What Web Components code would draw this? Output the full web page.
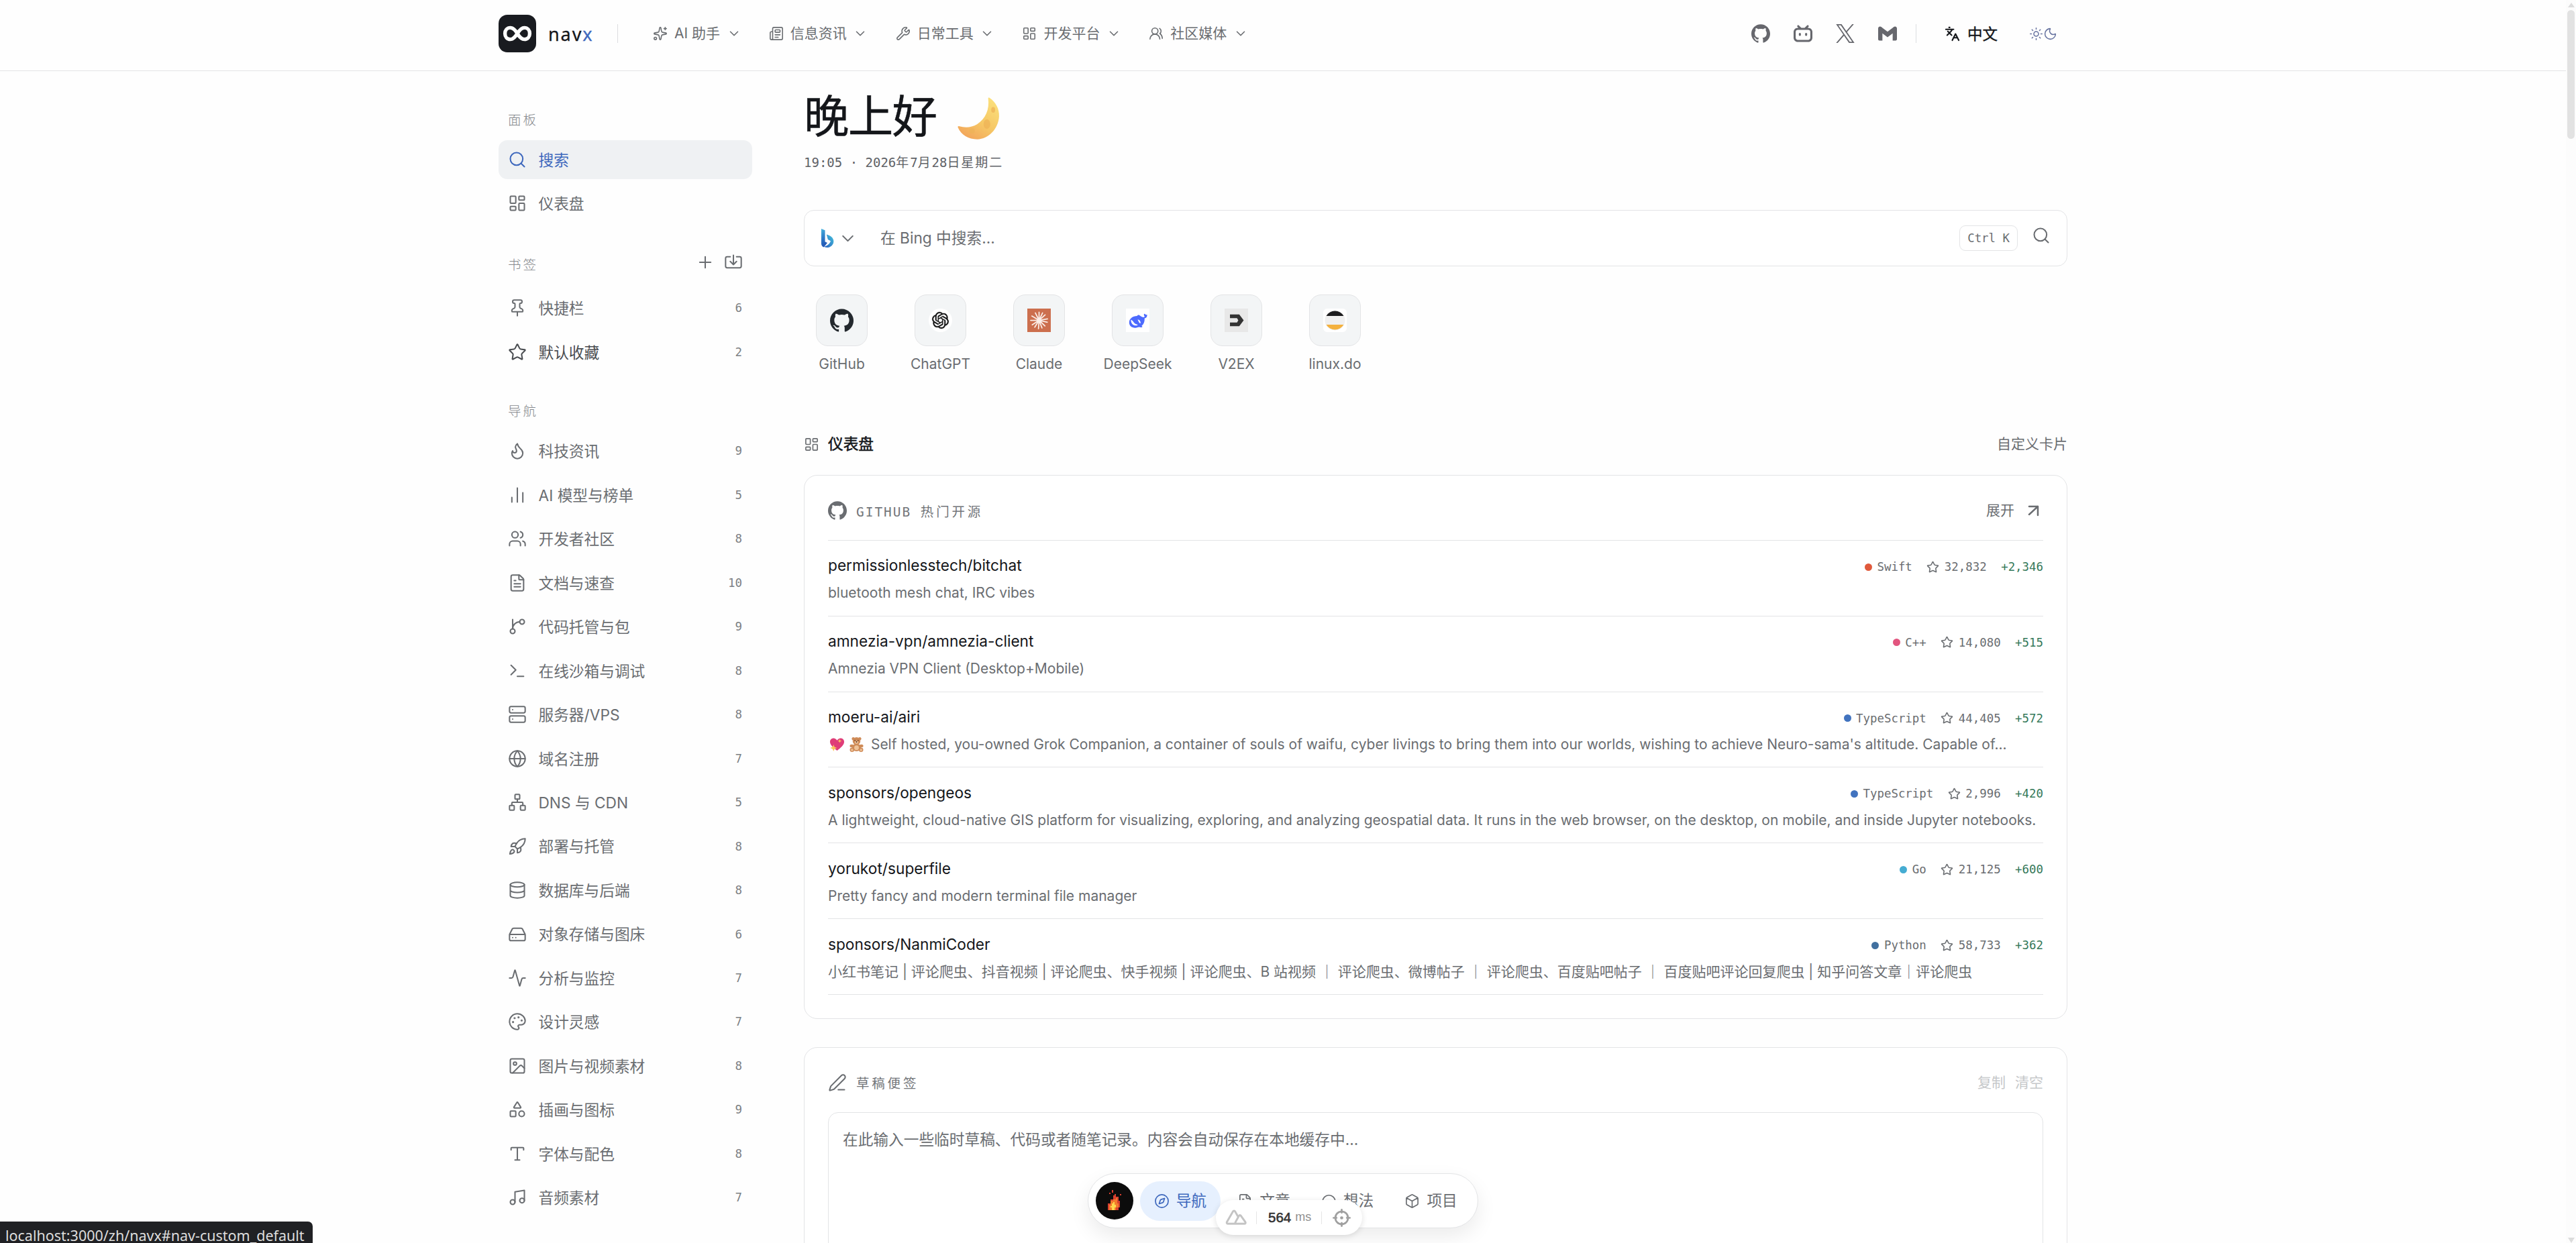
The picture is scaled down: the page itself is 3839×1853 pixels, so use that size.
<!DOCTYPE html>
<html lang="zh-CN">
<head>
<meta charset="utf-8">
<title>navx</title>
<style>
  html, body {
    margin: 0;
    height: 100%;
    overflow: hidden;
  }
  body {
    background: #fefefe;
    color: #6a6d71;
    font-family: Inter, "Noto Sans CJK SC", sans-serif;
    font-size: 22.7px;
    line-height: 1.2;
    --line: #e3e4e6;
    --text: #14161a;
    --muted: #6a6d71;
    --blue: #3e68bd;
    --mono: "DejaVu Sans Mono", "Noto Sans CJK SC", monospace;
  }
</style>
</head>
<body>
<nav-app></nav-app>

<script>
const ICONS = {
  sparkles: `<path d="M11.017 2.814a1 1 0 0 1 1.966 0l1.051 5.558a2 2 0 0 0 1.594 1.594l5.558 1.051a1 1 0 0 1 0 1.966l-5.558 1.051a2 2 0 0 0-1.594 1.594l-1.051 5.558a1 1 0 0 1-1.966 0l-1.051-5.558a2 2 0 0 0-1.594-1.594l-5.558-1.051a1 1 0 0 1 0-1.966l5.558-1.051a2 2 0 0 0 1.594-1.594z"/><path d="M20 2v4M22 4h-4"/><circle cx="4" cy="20" r="2"/>`,
  newspaper: `<path d="M15 18h-5M18 14h-8M4 22h16a2 2 0 0 0 2-2V4a2 2 0 0 0-2-2H8a2 2 0 0 0-2 2v16a2 2 0 0 1-4 0v-9a2 2 0 0 1 2-2h2"/><rect x="10" y="6" width="8" height="4" rx="1"/>`,
  wrench: `<path d="M14.7 6.3a1 1 0 0 0 0 1.4l1.6 1.6a1 1 0 0 0 1.4 0l3.106-3.105c.32-.322.863-.22.983.218a6 6 0 0 1-8.259 7.057l-7.91 7.91a1 1 0 0 1-2.999-3l7.91-7.91a6 6 0 0 1 7.057-8.259c.438.12.54.662.219.984z"/>`,
  dashboard: `<rect x="3" y="3" width="7" height="9" rx="1"/><rect x="14" y="3" width="7" height="5" rx="1"/><rect x="14" y="12" width="7" height="9" rx="1"/><rect x="3" y="16" width="7" height="5" rx="1"/>`,
  usersRound: `<path d="M18 21a8 8 0 0 0-16 0"/><circle cx="10" cy="8" r="5"/><path d="M22 20c0-3.37-2-6.5-4-8a5 5 0 0 0-.45-8.3"/>`,
  users: `<path d="M16 21v-2a4 4 0 0 0-4-4H6a4 4 0 0 0-4 4v2M16 3.128a4 4 0 0 1 0 7.744M22 21v-2a4 4 0 0 0-3-3.87"/><circle cx="9" cy="7" r="4"/>`,
  chevron: `<path d="m6 9 6 6 6-6"/>`,
  search: `<path d="m21 21-4.34-4.34"/><circle cx="11" cy="11" r="8"/>`,
  plus: `<path d="M5 12h14M12 5v14"/>`,
  import: `<path d="M12 3v12M8 11l4 4 4-4M8 5H4a2 2 0 0 0-2 2v10a2 2 0 0 0 2 2h16a2 2 0 0 0 2-2V7a2 2 0 0 0-2-2h-4"/>`,
  pin: `<path d="M12 17v5M9 10.76a2 2 0 0 1-1.11 1.79l-1.78.9A2 2 0 0 0 5 15.24V16a1 1 0 0 0 1 1h12a1 1 0 0 0 1-1v-.76a2 2 0 0 0-1.11-1.79l-1.78-.9A2 2 0 0 1 15 10.76V7a1 1 0 0 1 1-1 2 2 0 0 0 0-4H8a2 2 0 0 0 0 4 1 1 0 0 1 1 1z"/>`,
  star: `<path d="M11.525 2.295a.53.53 0 0 1 .95 0l2.31 4.679a2.123 2.123 0 0 0 1.595 1.16l5.166.756a.53.53 0 0 1 .294.904l-3.736 3.638a2.123 2.123 0 0 0-.611 1.878l.882 5.14a.53.53 0 0 1-.771.56l-4.618-2.428a2.122 2.122 0 0 0-1.973 0L6.396 21.01a.53.53 0 0 1-.77-.56l.881-5.139a2.122 2.122 0 0 0-.611-1.879L2.16 9.795a.53.53 0 0 1 .294-.906l5.165-.755a2.122 2.122 0 0 0 1.597-1.16z"/>`,
  flame: `<path d="M12 3q1 4 4 6.5t3 5.5a1 1 0 0 1-14 0 5 5 0 0 1 1-3 1 1 0 0 0 5 0c0-2-1.5-3-1.5-5q0-2 2.5-4"/>`,
  bars: `<path d="M5 21v-6M12 21V3M19 21V9"/>`,
  file: `<path d="M6 22a2 2 0 0 1-2-2V4a2 2 0 0 1 2-2h8a2.4 2.4 0 0 1 1.704.706l3.588 3.588A2.4 2.4 0 0 1 20 8v12a2 2 0 0 1-2 2z"/><path d="M14 2v5a1 1 0 0 0 1 1h5M10 9H8M16 13H8M16 17H8"/>`,
  branch: `<path d="M15 6a9 9 0 0 0-9 9V3"/><circle cx="18" cy="6" r="3"/><circle cx="6" cy="18" r="3"/>`,
  terminal: `<path d="M12 19h8M4 17l6-6-6-6"/>`,
  server: `<rect x="2" y="2" width="20" height="8" rx="2"/><rect x="2" y="14" width="20" height="8" rx="2"/><path d="M6 6h.01M6 18h.01"/>`,
  globe: `<circle cx="12" cy="12" r="10"/><path d="M12 2a14.5 14.5 0 0 0 0 20 14.5 14.5 0 0 0 0-20M2 12h20"/>`,
  network: `<rect x="16" y="16" width="6" height="6" rx="1"/><rect x="2" y="16" width="6" height="6" rx="1"/><rect x="9" y="2" width="6" height="6" rx="1"/><path d="M5 16v-3a1 1 0 0 1 1-1h12a1 1 0 0 1 1 1v3M12 12V8"/>`,
  rocket: `<path d="M4.5 16.5c-1.5 1.26-2 5-2 5s3.74-.5 5-2c.71-.84.7-2.13-.09-2.91a2.18 2.18 0 0 0-2.91-.09zM12 15l-3-3a22 22 0 0 1 2-3.95A12.88 12.88 0 0 1 22 2c0 2.72-.78 7.5-6 11a22.35 22.35 0 0 1-4 2z"/><path d="M9 12H4s.55-3.03 2-4c1.62-1.08 5 0 5 0M12 15v5s3.03-.55 4-2c1.08-1.62 0-5 0-5"/>`,
  database: `<ellipse cx="12" cy="5" rx="9" ry="3"/><path d="M3 5v14a9 3 0 0 0 18 0V5M3 12a9 3 0 0 0 18 0"/>`,
  drive: `<path d="M10 16h.01M6 16h.01M2.212 11.577a2 2 0 0 0-.212.896V18a2 2 0 0 0 2 2h16a2 2 0 0 0 2-2v-5.527a2 2 0 0 0-.212-.896L18.55 5.11A2 2 0 0 0 16.76 4H7.24a2 2 0 0 0-1.79 1.11zM21.946 12.013H2.054"/>`,
  activity: `<path d="M22 12h-2.48a2 2 0 0 0-1.93 1.46l-2.35 8.36a.25.25 0 0 1-.48 0L9.24 2.18a.25.25 0 0 0-.48 0l-2.35 8.36A2 2 0 0 1 4.49 12H2"/>`,
  palette: `<path d="M12 22a1 1 0 0 1 0-20 10 9 0 0 1 10 9 5 5 0 0 1-5 5h-2.25a1.75 1.75 0 0 0-1.4 2.8l.3.4a1.75 1.75 0 0 1-1.4 2.8z"/><g fill="currentColor"><circle cx="13.5" cy="6.5" r=".5"/><circle cx="17.5" cy="10.5" r=".5"/><circle cx="6.5" cy="12.5" r=".5"/><circle cx="8.5" cy="7.5" r=".5"/></g>`,
  image: `<rect x="3" y="3" width="18" height="18" rx="2"/><circle cx="9" cy="9" r="2"/><path d="m21 15-3.086-3.086a2 2 0 0 0-2.828 0L6 21"/>`,
  shapes: `<path d="M8.3 10a.7.7 0 0 1-.626-1.079L11.4 3a.7.7 0 0 1 1.198-.043L16.3 8.9a.7.7 0 0 1-.572 1.1z"/><rect x="3" y="14" width="7" height="7" rx="1"/><circle cx="17.5" cy="17.5" r="3.5"/>`,
  type: `<path d="M12 4v16M4 7V5a1 1 0 0 1 1-1h14a1 1 0 0 1 1 1v2M9 20h6"/>`,
  music: `<path d="M9 18V5l12-2v13"/><circle cx="6" cy="18" r="3"/><circle cx="18" cy="16" r="3"/>`,
  languages: `<path d="m5 8 6 6M4 14l6-6 2-3M2 5h12M7 2h1M22 22l-5-10-5 10M14 18h6"/>`,
  sun: `<circle cx="12" cy="12" r="4"/><path d="M12 2v2M12 20v2M4.93 4.93l1.41 1.41M17.66 17.66l1.41 1.41M2 12h2M20 12h2M6.34 17.66l-1.41 1.41M19.07 4.93l-1.41 1.41"/>`,
  moon: `<path d="M20.985 12.486a9 9 0 1 1-9.473-9.472c.405-.022.617.46.402.803a6 6 0 0 0 8.268 8.268c.344-.215.825-.004.803.401"/>`,
  arrow: `<path d="M5 6h13v13M18 6 5 18"/>`,
  pen: `<path d="M13 21h8M21.174 6.812a1 1 0 0 0-3.986-3.987L3.842 16.174a2 2 0 0 0-.5.83l-1.321 4.352a.5.5 0 0 0 .623.622l4.353-1.32a2 2 0 0 0 .83-.497z"/>`,
  compass: `<circle cx="12" cy="12" r="10"/><path d="m16.24 7.76-1.804 5.411a2 2 0 0 1-1.265 1.265L7.76 16.24l1.804-5.411a2 2 0 0 1 1.265-1.265z"/>`,
  bulb: `<path d="M5 20a10 10 0 1 1 14 0z"/>`,
  box: `<path d="M21 8a2 2 0 0 0-1-1.73l-7-4a2 2 0 0 0-2 0l-7 4A2 2 0 0 0 3 8v8a2 2 0 0 0 1 1.73l7 4a2 2 0 0 0 2 0l7-4A2 2 0 0 0 21 16ZM3.3 7l8.7 5 8.7-5M12 22V12"/>`,
  target: `<circle cx="12" cy="12" r="8.4"/><path d="M12 1.2v4M12 18.8v4M1.2 12h4M18.8 12h4"/><circle cx="12" cy="12" r=".9" fill="currentColor"/>`,
  github: `<path fill="currentColor" stroke="none" d="M12 .297c-6.63 0-12 5.373-12 12 0 5.303 3.438 9.8 8.205 11.385.6.113.82-.258.82-.577 0-.285-.01-1.04-.015-2.04-3.338.724-4.042-1.61-4.042-1.61C4.422 18.07 3.633 17.7 3.633 17.7c-1.087-.744.084-.729.084-.729 1.205.084 1.838 1.236 1.838 1.236 1.07 1.835 2.809 1.305 3.495.998.108-.776.417-1.305.76-1.605-2.665-.3-5.466-1.332-5.466-5.93 0-1.31.465-2.38 1.235-3.22-.135-.303-.54-1.523.105-3.176 0 0 1.005-.322 3.3 1.23.96-.267 1.98-.399 3-.405 1.02.006 2.04.138 3 .405 2.28-1.552 3.285-1.23 3.285-1.23.645 1.653.24 2.873.12 3.176.765.84 1.23 1.91 1.23 3.22 0 4.61-2.805 5.625-5.475 5.92.42.36.81 1.096.81 2.22 0 1.606-.015 2.896-.015 3.286 0 .315.21.69.825.57C20.565 22.092 24 17.592 24 12.297c0-6.627-5.373-12-12-12"/>`,
  bilibili: `<path fill="currentColor" stroke="none" d="M17.813 4.653h.854c1.51.054 2.769.578 3.773 1.574 1.004.995 1.524 2.249 1.56 3.76v7.36c-.036 1.51-.556 2.769-1.56 3.773s-2.262 1.524-3.773 1.56H5.333c-1.51-.036-2.769-.556-3.773-1.56S.036 18.858 0 17.347v-7.36c.036-1.511.556-2.765 1.56-3.76 1.004-.996 2.262-1.52 3.773-1.574h.774l-1.174-1.12a1.234 1.234 0 0 1-.373-.906c0-.356.124-.658.373-.907l.027-.027c.267-.249.573-.373.92-.373.347 0 .653.124.92.373L9.653 4.44c.071.071.134.142.187.213h4.267a.836.836 0 0 1 .16-.213l2.853-2.747c.267-.249.573-.373.92-.373.347 0 .662.151.929.4.267.249.391.551.391.907 0 .355-.124.657-.373.906zM5.333 7.24c-.746.018-1.373.276-1.88.773-.506.498-.769 1.13-.786 1.894v7.52c.017.764.28 1.395.786 1.893.507.498 1.134.756 1.88.773h13.334c.746-.017 1.373-.275 1.88-.773.506-.498.769-1.129.786-1.893v-7.52c-.017-.765-.28-1.396-.786-1.894-.507-.497-1.134-.755-1.88-.773z"/><g fill="currentColor" stroke="none"><rect x="6.7" y="11.1" width="2.6" height="3.9" rx="1.3"/><rect x="14.7" y="11.1" width="2.6" height="3.9" rx="1.3"/></g>`,
  x: `<path fill="currentColor" stroke="none" d="M14.234 10.162 22.977 0h-2.072l-7.591 8.824L7.251 0H.258l9.168 13.343L.258 24H2.33l8.016-9.318L16.749 24h6.993zm-2.837 3.299-.929-1.329L3.076 1.56h3.182l5.965 8.532.929 1.329 7.754 11.09h-3.182z"/>`,
  gmail: `<path fill="currentColor" stroke="none" d="M24 5.457v13.909c0 .904-.732 1.636-1.636 1.636h-3.819V11.73L12 16.64l-6.545-4.91v9.273H1.636A1.636 1.636 0 0 1 0 19.366V5.457c0-2.023 2.309-3.178 3.927-1.964L5.455 4.64 12 9.548l6.545-4.91 1.528-1.145C21.69 2.28 24 3.434 24 5.457z"/>`,
  infinity: `<rect width="24" height="24" rx="5.6" fill="#191b20" stroke="none"/><path stroke="#fff" stroke-width="2.3" d="M12 12c1.6-2.6 2.9-3.7 4.5-3.7 2 0 3.4 1.6 3.4 3.7s-1.4 3.7-3.4 3.7c-1.6 0-2.9-1.1-4.5-3.7s-2.9-3.7-4.5-3.7c-2 0-3.4 1.6-3.4 3.7s1.4 3.7 3.4 3.7c1.6 0 2.9-1.1 4.5-3.7z"/>`,
  bing: `<defs><linearGradient id="b" x1="0" y1="0" x2=".3" y2="1"><stop offset="0" stop-color="#46b6e0"/><stop offset=".6" stop-color="#2b74c4"/><stop offset="1" stop-color="#2457b5"/></linearGradient><linearGradient id="c" x1="1" y1="0" x2="0" y2="1"><stop offset="0" stop-color="#45c3dc"/><stop offset="1" stop-color="#2a5fc0"/></linearGradient></defs><path fill="url(#b)" stroke="none" d="M4.2 0 9 1.9v14.5L12 18l-4.5 5.5C5.5 22.8 4.2 21 4.2 18.8z"/><path fill="url(#c)" stroke="none" d="M11 7.2c5 1.4 9 4.2 9 8.8 0 4.7-4 8-8.6 8-1.6 0-3-.4-4.2-1.2 3.4-.2 8.300-3.6 9-7.2l-3.5-1.8z"/>`,
  openai: `<circle cx="12" cy="12" r="12" fill="#fff" stroke="none"/><path transform="translate(3.500 3.500) scale(.708)" fill="#111" stroke="#111" stroke-width=".4" d="M22.2819 9.8211a5.9847 5.9847 0 0 0-.5157-4.9108 6.0462 6.0462 0 0 0-6.5098-2.9A6.0651 6.0651 0 0 0 4.9807 4.1818a5.9847 5.9847 0 0 0-3.9977 2.9 6.0462 6.0462 0 0 0 .7427 7.0966 5.98 5.98 0 0 0 .511 4.9107 6.051 6.051 0 0 0 6.5146 2.9001A5.9847 5.9847 0 0 0 13.2599 24a6.0557 6.0557 0 0 0 5.7718-4.2058 5.9894 5.9894 0 0 0 3.9977-2.9001 6.0557 6.0557 0 0 0-.7475-7.0729zm-9.022 12.6081a4.4755 4.4755 0 0 1-2.8764-1.0408l.1419-.0804 4.7783-2.7582a.7948.7948 0 0 0 .3927-.6813v-6.7369l2.02 1.1686a.071.071 0 0 1 .038.052v5.5826a4.504 4.504 0 0 1-4.4945 4.4944zm-9.6607-4.1254a4.4708 4.4708 0 0 1-.5346-3.0137l.142.0852 4.783 2.7582a.7712.7712 0 0 0 .7806 0l5.8428-3.3685v2.3324a.0804.0804 0 0 1-.0332.0615L9.74 19.9502a4.4992 4.4992 0 0 1-6.1408-1.6464zM2.3408 7.8956a4.485 4.485 0 0 1 2.3655-1.9728V11.6a.7664.7664 0 0 0 .3879.6765l5.8144 3.3543-2.0201 1.1685a.0757.0757 0 0 1-.071 0l-4.8303-2.7865A4.504 4.504 0 0 1 2.3408 7.872zm16.5963 3.8558L13.1038 8.364 15.1192 7.2a.0757.0757 0 0 1 .071 0l4.8303 2.7913a4.4944 4.4944 0 0 1-.6765 8.1042v-5.6772a.79.79 0 0 0-.407-.667zm2.0107-3.0231l-.142-.0852-4.7735-2.7818a.7759.7759 0 0 0-.7854 0L9.409 9.2297V6.8974a.0662.0662 0 0 1 .0284-.0615l4.8303-2.7866a4.4992 4.4992 0 0 1 6.6802 4.66zM8.3065 12.863l-2.02-1.1638a.0804.0804 0 0 1-.038-.0567V6.0742a4.4992 4.4992 0 0 1 7.3757-3.4537l-.142.0805L8.704 5.459a.7948.7948 0 0 0-.3927.6813zm1.0976-2.3654l2.602-1.4998 2.6069 1.4998v2.9994l-2.5974 1.4997-2.6067-1.4997Z"/>`,
  claude: `<rect width="24" height="24" fill="#cc6f4e" stroke="none"/><path stroke="#fbeee8" stroke-width="1.2" d="M12 12V3.6M12 12l3.6-7.6M12 12l6.2-5.6M12 12l8.6-1.4M12 12l8.4 2M12 12l6 5.8M12 12l3 7.8M12 12l-.6 8.6M12 12l-4.4 7M12 12l-7 4.6M12 12H3.4M12 12 4.6 7.6M12 12 8.2 4.4"/>`,
  deepseek: `<rect width="24" height="24" fill="#fff" stroke="none"/><path fill="#4d6bfe" stroke="none" d="M21.6 6.2c-.8.5-1.4.1-2-.5-.5-.5-1-.6-1.200.1-.2 1 .2 1.900 1 2.500-.8.6-1.8.7-2.7.3-1.3-.6-2-1.5-3.200-2-1.200-.3-1.700.2-2.200 1-4.300.1-8 2.700-8 6.700 0 3.600 3 5.700 6.500 5.400 1.700-.1 3.200-1 4.300-.7.9.3 2 .5 2.600-.2.2-.4-.2-.6-.8-.9 2.700-2.200 3.300-5.400 3.100-7.900 1.900-.3 2.900-1.800 2.600-3.800z"/><path fill="#fff" stroke="none" d="M11.600 16.200c-3.800-.3-4-4.400-6.600-4.800.1 3.800 2.400 6.300 6.200 5.900.7-.1.900-.8.4-1.100zM14.500 15.200c-1.600-.9-1.500-2.800-2.600-3.900 1.500-.1 3 1.100 3.100 3.100z"/>`,
  v2ex: `<rect width="24" height="24" fill="#e8e8e8" stroke="none"/><path fill="#333" stroke="none" d="M5.5 6H15l4.500 6-4.500 6H5.500v-3.800h7.200l1.300-2.200-1.300-2.200H5.500z"/>`,
  linuxdo: `<rect width="24" height="24" rx="4" fill="#fff" stroke="none"/><g stroke="none"><circle cx="12" cy="12" r="10.3" fill="#f0f0f0"/><path fill="#1c1c1e" d="M3.100 7.500a10.300 10.300 0 0 1 17.800 0z"/><path fill="#f4b13e" d="M3.100 16.500a10.300 10.300 0 0 0 17.800 0z"/></g>`,
  crescent: `<defs><linearGradient id="m" x1=".8" y1="0" x2=".2" y2="1"><stop offset="0" stop-color="#fbe07c"/><stop offset=".55" stop-color="#f6c765"/><stop offset="1" stop-color="#f2a35a"/></linearGradient></defs><path fill="url(#m)" stroke="none" d="M18.2.3c3.6 2.4 5.6 6.3 5.4 10.4-.4 6.9-5.8 12.7-12.2 12.8-4.9 0-9-2.3-10.8-6.6-.2-.6.2-.9.8-.7 3.1.9 6.800.8 9.900-1.100 4.800-3 7-8.300 6.200-14.400 0-.5.300-.6.7-.4z"/><g fill="#eeb357" stroke="none" opacity=".75"><ellipse cx="16.8" cy="15" rx="1.9" ry="2.6"/><ellipse cx="20.3" cy="7" rx="1.1" ry="1.6"/><ellipse cx="8.5" cy="18.8" rx="1.5" ry="1.5"/></g>`,
  heart: `<path fill="#df3d78" stroke="none" d="M12 22C6 17.500 1 13 1 8.200 1 4.800 3.500 2.500 6.500 2.500c2.200 0 4.400 1.300 5.500 3.500 1.100-2.200 3.300-3.500 5.500-3.500 3 0 5.500 2.300 5.500 5.700C23 13 18 17.500 12 22z"/><path fill="#fbc65a" stroke="none" d="m16 4 .9 2.100L19 7l-2.100.9L16 10l-.9-2.100L13 7l2.100-.9zM6.500 12.500 8 16.200l3.700 1.500L8 19.200l-1.500 3.700L5 19.200l-3.700-1.500L5 16.200z"/>`,
  teddy: `<g fill="#cf8b58" stroke="none"><circle cx="7" cy="3.500" r="2.400"/><circle cx="17" cy="3.500" r="2.400"/><circle cx="12" cy="7" r="6"/><ellipse cx="12" cy="17" rx="7" ry="6"/><ellipse cx="4.500" cy="14.500" rx="3" ry="2.300"/><ellipse cx="19.500" cy="14.500" rx="3" ry="2.300"/><circle cx="5" cy="20.500" r="3.400"/><circle cx="19" cy="20.500" r="3.400"/></g><g fill="#efc398" stroke="none"><ellipse cx="12" cy="9" rx="2.800" ry="2.200"/><ellipse cx="12" cy="17.500" rx="3.600" ry="3.600"/><circle cx="5" cy="20.800" r="1.800"/><circle cx="19" cy="20.800" r="1.800"/></g><g fill="#4b2c20" stroke="none"><circle cx="9.500" cy="6" r=".8"/><circle cx="14.500" cy="6" r=".8"/><circle cx="12" cy="8.300" r="1"/></g>`,
  nuxt: `<path d="M13.4 19H3.2c-1.4 0-1.9-1-1.3-2.1L8.600 5.300c.6-1 1.800-1 2.400 0l3 5.200M17.600 10.200l-.1-.1c-.6-1-1.600-1-2.200 0L11.500 17c-.7 1.200-.2 2 1.100 2h8.700c1.300 0 1.700-1 1.100-2z"/>`
};

class NavIcon extends HTMLElement {
  constructor() {
    super();
    this.attachShadow({ mode: "open" });
  }

  connectedCallback() {
    const size = this.getAttribute("size") || "28";
    const stroke = this.getAttribute("stroke") || "1.75";
    this.shadowRoot.innerHTML = `
      <style>
        :host { display: inline-flex; flex: none; }
        svg { display: block; }
      </style>
      <svg width="${size}" height="${size}" viewBox="0 0 24 24" fill="none" stroke="currentColor"
        stroke-width="${stroke}" stroke-linecap="round" stroke-linejoin="round">${ICONS[this.getAttribute("name")] || ""}</svg>
    `;
  }
}

class NavMenu extends HTMLElement {
  constructor() {
    super();
    this.attachShadow({ mode: "open" }).innerHTML = `
      <style>
        :host {
          display: flex;
          align-items: center;
          font-size: 21px;
          white-space: nowrap;
        }
        span { margin: 0 9.5px 0 10px; }
      </style>
      <nav-icon name="${this.getAttribute("icon")}" size="22"></nav-icon>
      <span><slot></slot></span>
      <nav-icon name="chevron" size="22"></nav-icon>
    `;
  }
}

class NavHeader extends HTMLElement {
  constructor() {
    super();
    this.attachShadow({ mode: "open" }).innerHTML = `
      <style>
        :host {
          display: block;
          height: 105px;
          border-bottom: 1px solid var(--line);
          background: #fefefe;
        }
        .inner {
          display: flex;
          align-items: center;
          box-sizing: border-box;
          width: 2338px;
          height: 100px;
          margin: 0 auto;
          padding-right: 14px;
        }
        .brand {
          display: flex;
          align-items: center;
          gap: 18px;
          width: 177px;
          font: 400 27px "Noto Sans", sans-serif;
          letter-spacing: 1.9px;
          -webkit-text-stroke: .3px currentColor;
          color: var(--text);
        }
        .brand b { font-weight: 400; color: var(--blue); }
        .sep { width: 1px; height: 28px; background: #dcdde0; }
        nav { display: flex; gap: 41.3px; margin-left: 52px; }
        .actions { display: flex; align-items: center; margin-left: auto; }
        .social { display: flex; gap: 35px; margin-right: 28px; color: #66676d; }
        .lang {
          display: flex;
          align-items: center;
          gap: 11px;
          margin: 0 47px 0 42px;
          font-size: 22.5px;
          -webkit-text-stroke: .4px currentColor;
          color: var(--text);
        }
        .theme { display: flex; margin-right: 1px; color: #6773a0; }
      </style>
      <div class="inner">
        <div class="brand"><nav-icon name="infinity" size="56"></nav-icon><span>nav<b>x</b></span></div>
        <div class="sep"></div>
        <nav>
          <nav-menu icon="sparkles">AI 助手</nav-menu>
          <nav-menu icon="newspaper">信息资讯</nav-menu>
          <nav-menu icon="wrench">日常工具</nav-menu>
          <nav-menu icon="dashboard">开发平台</nav-menu>
          <nav-menu icon="usersRound">社区媒体</nav-menu>
        </nav>
        <div class="actions">
          <div class="social">
            <nav-icon name="github"></nav-icon>
            <nav-icon name="bilibili"></nav-icon>
            <nav-icon name="x"></nav-icon>
            <nav-icon name="gmail"></nav-icon>
          </div>
          <div class="sep"></div>
          <div class="lang"><nav-icon name="languages" size="23" stroke="2.2"></nav-icon>中文</div>
          <div class="theme"><nav-icon name="sun" size="21"></nav-icon><nav-icon name="moon" size="21"></nav-icon></div>
        </div>
      </div>
    `;
  }
}

class SideItem extends HTMLElement {
  constructor() {
    super();
    this.attachShadow({ mode: "open" }).innerHTML = `
      <style>
        :host {
          display: flex;
          align-items: center;
          box-sizing: border-box;
          height: 58px;
          padding: 0 15px 0 14px;
          border-radius: 13px;
        }
        :host([active]) { background: #eff1f3; color: var(--blue); }
        :host([hover]) { color: #4a4d51; }
        .label { flex: 1; margin-left: 17.5px; padding-top: 1px; }
        .count { font: 17.4px var(--mono); color: #7c7f83; }
      </style>
      <nav-icon name="${this.getAttribute("icon")}"></nav-icon>
      <span class="label"><slot></slot></span>
      <span class="count">${this.getAttribute("count") || ""}</span>
    `;
  }
}

class SideSection extends HTMLElement {
  constructor() {
    super();
    this.attachShadow({ mode: "open" }).innerHTML = `
      <style>
        :host { display: flex; flex-direction: column; gap: 7.47px; }
        header {
          display: flex;
          align-items: center;
          justify-content: space-between;
          height: 27px;
          padding: 0 14px;
          margin-bottom: 10.5px;
          font: 300 19.5px var(--mono);
          letter-spacing: 2.9px;
          color: #85888c;
        }
        :host([tools]) header { height: 33px; margin-bottom: 13px; }
        .tools { display: flex; align-items: center; gap: 14px; color: var(--muted); margin-top: -4px; }
      </style>
      <header><span>${this.getAttribute("label")}</span><div class="tools"><slot name="tools"></slot></div></header>
      <slot></slot>
    `;
  }
}

class NavSidebar extends HTMLElement {
  constructor() {
    super();
    this.attachShadow({ mode: "open" }).innerHTML = `
      <style>
        :host {
          display: flex;
          flex-direction: column;
          gap: 44.5px;
          width: 378px;
          padding-top: 58px;
        }
      </style>
      <side-section label="面板">
        <side-item icon="search" active>搜索</side-item>
        <side-item icon="dashboard">仪表盘</side-item>
      </side-section>
      <side-section label="书签" tools>
        <nav-icon slot="tools" name="plus"></nav-icon>
        <nav-icon slot="tools" name="import"></nav-icon>
        <side-item icon="pin" count="6">快捷栏</side-item>
        <side-item icon="star" count="2" hover>默认收藏</side-item>
      </side-section>
      <side-section label="导航">
        <side-item icon="flame" count="9">科技资讯</side-item>
        <side-item icon="bars" count="5">AI 模型与榜单</side-item>
        <side-item icon="users" count="8">开发者社区</side-item>
        <side-item icon="file" count="10">文档与速查</side-item>
        <side-item icon="branch" count="9">代码托管与包</side-item>
        <side-item icon="terminal" count="8">在线沙箱与调试</side-item>
        <side-item icon="server" count="8">服务器/VPS</side-item>
        <side-item icon="globe" count="7">域名注册</side-item>
        <side-item icon="network" count="5">DNS 与 CDN</side-item>
        <side-item icon="rocket" count="8">部署与托管</side-item>
        <side-item icon="database" count="8">数据库与后端</side-item>
        <side-item icon="drive" count="6">对象存储与图床</side-item>
        <side-item icon="activity" count="7">分析与监控</side-item>
        <side-item icon="palette" count="7">设计灵感</side-item>
        <side-item icon="image" count="8">图片与视频素材</side-item>
        <side-item icon="shapes" count="9">插画与图标</side-item>
        <side-item icon="type" count="8">字体与配色</side-item>
        <side-item icon="music" count="7">音频素材</side-item>
      </side-section>
    `;
  }
}

class NavGreeting extends HTMLElement {
  constructor() {
    super();
    this.attachShadow({ mode: "open" }).innerHTML = `
      <style>
        :host { display: block; }
        h1 {
          display: flex;
          align-items: center;
          gap: 31px;
          height: 90px;
          margin: 0;
          font-size: 67.5px;
          font-weight: 400;
          letter-spacing: -1.7px;
          -webkit-text-stroke: .5px currentColor;
          color: var(--text);
        }
        nav-icon { margin-top: 7px; }
        p {
          height: 30px;
          margin: 9px 0 0;
          font: 19px/30px var(--mono);
          color: #5f6267;
        }
        .cjk { letter-spacing: 1.9px; }
      </style>
      <h1>晚上好<nav-icon name="crescent" size="64"></nav-icon></h1>
      <p>19:05 · 2026<span class="cjk">年</span>7<span class="cjk">月</span>28<span class="cjk">日星期二</span></p>
    `;
  }
}

class SearchBox extends HTMLElement {
  constructor() {
    super();
    this.attachShadow({ mode: "open" }).innerHTML = `
      <style>
        :host {
          display: flex;
          align-items: center;
          box-sizing: border-box;
          height: 84px;
          padding: 0 24px 0 20px;
          border: 1px solid var(--line);
          border-radius: 15px;
          background: #fff;
        }
        .hint { flex: 1; margin-left: 34px; }
        .engine { display: flex; align-items: center; gap: 2px; }
        kbd {
          box-sizing: border-box;
          height: 38px;
          padding: 0 11px;
          margin-right: 21px;
          border: 1px solid var(--line);
          border-radius: 9px;
          font: 17.4px/36px var(--mono);
        }
        .go { margin-top: -8px; }
      </style>
      <div class="engine">
        <nav-icon name="bing"></nav-icon>
        <nav-icon name="chevron" size="29"></nav-icon>
      </div>
      <span class="hint"><slot></slot></span>
      <kbd>Ctrl K</kbd>
      <nav-icon class="go" name="search"></nav-icon>
    `;
  }
}

class QuickLink extends HTMLElement {
  constructor() {
    super();
    this.attachShadow({ mode: "open" }).innerHTML = `
      <style>
        :host {
          display: flex;
          flex-direction: column;
          align-items: center;
          width: 113px;
          font-size: 21px;
        }
        .tile {
          display: flex;
          align-items: center;
          justify-content: center;
          box-sizing: border-box;
          width: 77px;
          height: 77px;
          margin-bottom: 13.5px;
          border: 1px solid var(--line);
          border-radius: 18px;
          background: #f3f5f6;
          color: #24292e;
        }
      </style>
      <div class="tile"><nav-icon name="${this.getAttribute("icon")}" size="35"></nav-icon></div>
      <slot></slot>
    `;
  }
}

class DashCard extends HTMLElement {
  constructor() {
    super();
    this.attachShadow({ mode: "open" }).innerHTML = `
      <style>
        :host {
          display: block;
          box-sizing: border-box;
          padding: 0 35px 35px;
          border: 1px solid var(--line);
          border-radius: 20px;
          background: #fff;
        }
        header {
          display: flex;
          align-items: center;
          box-sizing: border-box;
          height: 96px;
          padding-top: 8px;
        }
        .title {
          flex: 1;
          margin-left: 14px;
          font: 19.5px var(--mono);
          letter-spacing: 1.95px;
          color: #73767a;
        }
        .action { display: flex; align-items: center; font-size: 21px; }
      </style>
      <header>
        <nav-icon name="${this.getAttribute("icon")}"></nav-icon>
        <span class="title"><slot name="title"></slot></span>
        <div class="action"><slot name="action"></slot></div>
      </header>
      <slot></slot>
    `;
  }
}

class RepoRow extends HTMLElement {
  constructor() {
    super();
    const a = (name) => this.getAttribute(name);
    this.attachShadow({ mode: "open" }).innerHTML = `
      <style>
        :host {
          display: block;
          box-sizing: border-box;
          height: 112.83px;
          padding: 19px 0 0;
          border-top: 1px solid var(--line);
        }
        .top { display: flex; align-items: center; justify-content: space-between; height: 36px; }
        .name { font-size: 22.7px; color: var(--text); }
        .meta {
          display: flex;
          align-items: center;
          gap: 21.5px;
          margin-top: 4px;
          font: 17.4px var(--mono);
        }
        .meta span { display: flex; align-items: center; gap: 7.5px; }
        .dot { width: 11px; height: 11px; border-radius: 50%; background: ${a("color")}; }
        .up { color: #35795a; }
        .desc {
          display: flex;
          align-items: center;
          height: 34px;
          margin-top: 6px;
          font-size: 21px;
          white-space: pre;
        }
      </style>
      <div class="top">
        <div class="name">${a("name")}</div>
        <div class="meta">
          <span><i class="dot"></i>${a("lang")}</span>
          <span><nav-icon name="star" size="19" stroke="2"></nav-icon>${a("stars")}</span>
          <span class="up">${a("up")}</span>
        </div>
      </div>
      <div class="desc"><slot></slot></div>
    `;
  }
}

class NavMain extends HTMLElement {
  constructor() {
    super();
    this.attachShadow({ mode: "open" }).innerHTML = `
      <style>
        :host { display: block; width: 1883px; padding-top: 22px; }
        search-box { margin-top: 56px; }
        .links { display: flex; gap: 34px; margin: 42px 0 0; height: 117px; }
        .head {
          display: flex;
          align-items: center;
          height: 40px;
          margin: 86px 0 26px;
        }
        .head h2 {
          flex: 1;
          margin: 0 0 0 13px;
          font-size: 22.7px;
          font-weight: 400;
          -webkit-text-stroke: .5px currentColor;
          color: var(--text);
        }
        .head span { font-size: 21px; }
        .rows { border-bottom: 1px solid var(--line); }
        .cjk { letter-spacing: 3.8px; }
        dash-card + dash-card { margin-top: 42px; }
        .arrow { margin: 0 2px 0 17px; }
        .off { color: #c6c8ca; }
        .note {
          box-sizing: border-box;
          height: 300px;
          padding: 26px 21px;
          border: 1px solid var(--line);
          border-radius: 15px;
        }
        .emoji { margin: 0 4px 0 2px; }
      </style>
      <nav-greeting></nav-greeting>
      <search-box>在 Bing 中搜索...</search-box>
      <div class="links">
        <quick-link icon="github">GitHub</quick-link>
        <quick-link icon="openai">ChatGPT</quick-link>
        <quick-link icon="claude">Claude</quick-link>
        <quick-link icon="deepseek">DeepSeek</quick-link>
        <quick-link icon="v2ex">V2EX</quick-link>
        <quick-link icon="linuxdo">linux.do</quick-link>
      </div>
      <div class="head">
        <nav-icon name="dashboard" size="23"></nav-icon>
        <h2>仪表盘</h2>
        <span>自定义卡片</span>
      </div>
      <dash-card icon="github">
        <span slot="title">GITHUB <span class="cjk">热门开源</span></span>
        <span slot="action">展开</span>
        <nav-icon class="arrow" slot="action" name="arrow" size="24" stroke="2.5"></nav-icon>
        <div class="rows">
          <repo-row name="permissionlesstech/bitchat" lang="Swift" color="#e0593b" stars="32,832" up="+2,346">bluetooth mesh chat, IRC vibes</repo-row>
          <repo-row name="amnezia-vpn/amnezia-client" lang="C++" color="#e2557f" stars="14,080" up="+515">Amnezia VPN Client (Desktop+Mobile)</repo-row>
          <repo-row name="moeru-ai/airi" lang="TypeScript" color="#4173bf" stars="44,405" up="+572"><nav-icon class="emoji" name="heart" size="23"></nav-icon><nav-icon class="emoji" name="teddy" size="23"></nav-icon> Self hosted, you-owned Grok Companion, a container of souls of waifu, cyber livings to bring them into our worlds, wishing to achieve Neuro-sama's altitude. Capable of...</repo-row>
          <repo-row name="sponsors/opengeos" lang="TypeScript" color="#4173bf" stars="2,996" up="+420">A lightweight, cloud-native GIS platform for visualizing, exploring, and analyzing geospatial data. It runs in the web browser, on the desktop, on mobile, and inside Jupyter notebooks.</repo-row>
          <repo-row name="yorukot/superfile" lang="Go" color="#45acd2" stars="21,125" up="+600">Pretty fancy and modern terminal file manager</repo-row>
          <repo-row name="sponsors/NanmiCoder" lang="Python" color="#41709f" stars="58,733" up="+362">小红书笔记 | 评论爬虫、抖音视频 | 评论爬虫、快手视频 | 评论爬虫、B 站视频 ｜ 评论爬虫、微博帖子 ｜ 评论爬虫、百度贴吧帖子 ｜ 百度贴吧评论回复爬虫 | 知乎问答文章｜评论爬虫</repo-row>
        </div>
      </dash-card>
      <dash-card icon="pen">
        <span slot="title" class="cjk">草稿便签</span>
        <span slot="action" class="off">复制</span>
        <span slot="action" class="off" style="margin-left:14px">清空</span>
        <div class="note">在此输入一些临时草稿、代码或者随笔记录。内容会自动保存在本地缓存中...</div>
      </dash-card>
    `;
  }
}

class DockItem extends HTMLElement {
  constructor() {
    super();
    this.attachShadow({ mode: "open" }).innerHTML = `
      <style>
        :host {
          display: flex;
          align-items: center;
          gap: 10px;
          height: 59px;
          padding: 0 21px;
          border-radius: 30px;
          font-size: 22.7px;
        }
        :host([active]) { background: #e6f0fe; color: var(--blue); }
      </style>
      <nav-icon name="${this.getAttribute("icon")}" size="23"></nav-icon>
      <slot></slot>
    `;
  }
}

class NavDock extends HTMLElement {
  constructor() {
    super();
    this.attachShadow({ mode: "open" }).innerHTML = `
      <style>
        :host {
          position: absolute;
          left: 1621px;
          top: 1749px;
          display: flex;
          align-items: center;
          gap: 4.2px;
          box-sizing: border-box;
          width: 582px;
          height: 82px;
          padding-left: 10.5px;
          border: 1px solid var(--line);
          border-radius: 41px;
          background: #fff;
          box-shadow: 0 12px 30px rgba(0, 0, 0, .08);
        }
        .avatar { flex: none; margin-right: 6px; border-radius: 50%; background: #0c0c0c; }
      </style>
      <svg class="avatar" width="56" height="56" viewBox="0 0 28 28" shape-rendering="crispEdges">
        <path fill="#d8402f" d="M12 6h1v2h-1zM10 8h1v1h-1zM18 9h1v1h-1zM14 9h1v2h2v3h1v5h-1v2H9v-5h2v-3h2v-3h1z"/>
        <path fill="#f37b2c" d="M13 13h2v-1h1v4h1v3h-2v2h-5v-4h1v-3h2z"/>
        <path fill="#ffd84d" d="M13 15h1v2h1v2h-1v2h-2v-2h-1v-1h1v-2h1z"/>
      </svg>
      <dock-item icon="compass" active>导航</dock-item>
      <dock-item icon="file">文章</dock-item>
      <dock-item icon="bulb">想法</dock-item>
      <dock-item icon="box">项目</dock-item>
    `;
  }
}

class DevPanel extends HTMLElement {
  constructor() {
    super();
    this.attachShadow({ mode: "open" }).innerHTML = `
      <style>
        :host {
          position: absolute;
          left: 1812px;
          top: 1789px;
          display: flex;
          align-items: center;
          box-sizing: border-box;
          width: 218px;
          height: 52px;
          padding-left: 14px;
          border-radius: 26px;
          background: #fff;
          box-shadow: 0 2px 10px rgba(0, 0, 0, .12);
        }
        i { width: 1px; height: 19px; background: #e6e6e6; }
        b { margin: 0 6px 0 17px; font: 400 20.5px "Liberation Sans", sans-serif; -webkit-text-stroke: .6px #333; color: #333; }
        small { margin-right: 15px; font-size: 18px; font-family: "Liberation Sans", sans-serif; color: #909090; }
        nav-icon { color: #c4c4c4; }
        .target { margin-left: 16px; color: #a0a0a0; }
      </style>
      <nav-icon name="nuxt" size="32" stroke="2.2"></nav-icon>
      <i style="margin-left:14px"></i><b>564</b><small>ms</small><i></i>
      <nav-icon class="target" name="target" size="27" stroke="2.4"></nav-icon>
    `;
  }
}

class LinkStatus extends HTMLElement {
  constructor() {
    super();
    this.attachShadow({ mode: "open" }).innerHTML = `
      <style>
        :host {
          position: absolute;
          left: 0;
          bottom: 0;
          box-sizing: border-box;
          width: 466px;
          height: 32px;
          padding-left: 8px;
          border-radius: 0 7px 0 0;
          background: #202124;
          color: #ddd;
          font: 21.5px/42px "Noto Sans", sans-serif;
          white-space: nowrap;
          overflow: hidden;
        }
      </style>
      <slot></slot>
    `;
  }
}

class ScrollRail extends HTMLElement {
  constructor() {
    super();
    this.attachShadow({ mode: "open" }).innerHTML = `
      <style>
        :host {
          display: flex;
          flex-direction: column;
          align-items: center;
          width: 15px;
          height: 1853px;
          background: #fcfcfc;
        }
        .up, .down { border: 5px solid transparent; }
        .up { border-bottom: 7px solid #dcdcdc; border-top: 0; margin: 4px 0; }
        .down { border-top: 8px solid #dcdcdc; border-bottom: 0; margin-top: auto; }
        .thumb { width: 11px; height: 192px; border-radius: 6px; background: #e2e2e2; }
      </style>
      <div class="up"></div>
      <div class="thumb"></div>
      <div class="down"></div>
    `;
  }
}

class NavApp extends HTMLElement {
  constructor() {
    super();
    this.attachShadow({ mode: "open" }).innerHTML = `
      <style>
        :host {
          position: relative;
          display: flex;
          width: 3839px;
          height: 1853px;
          overflow: hidden;
        }
        .page { width: 3824px; }
        .cols { display: flex; gap: 77px; width: 2338px; margin: 0 auto; }
      </style>
      <div class="page">
        <nav-header></nav-header>
        <div class="cols">
          <nav-sidebar></nav-sidebar>
          <nav-main></nav-main>
        </div>
      </div>
      <scroll-rail></scroll-rail>
      <nav-dock></nav-dock>
      <dev-panel></dev-panel>
      <link-status>localhost:3000/zh/navx#nav-custom_default</link-status>
    `;
  }
}

customElements.define("nav-icon", NavIcon);
customElements.define("nav-app", NavApp);
customElements.define("nav-header", NavHeader);
customElements.define("nav-menu", NavMenu);
customElements.define("nav-sidebar", NavSidebar);
customElements.define("side-section", SideSection);
customElements.define("side-item", SideItem);
customElements.define("nav-main", NavMain);
customElements.define("nav-greeting", NavGreeting);
customElements.define("search-box", SearchBox);
customElements.define("quick-link", QuickLink);
customElements.define("dash-card", DashCard);
customElements.define("repo-row", RepoRow);
customElements.define("nav-dock", NavDock);
customElements.define("dock-item", DockItem);
customElements.define("dev-panel", DevPanel);
customElements.define("link-status", LinkStatus);
customElements.define("scroll-rail", ScrollRail);
</script>
</body>
</html>
